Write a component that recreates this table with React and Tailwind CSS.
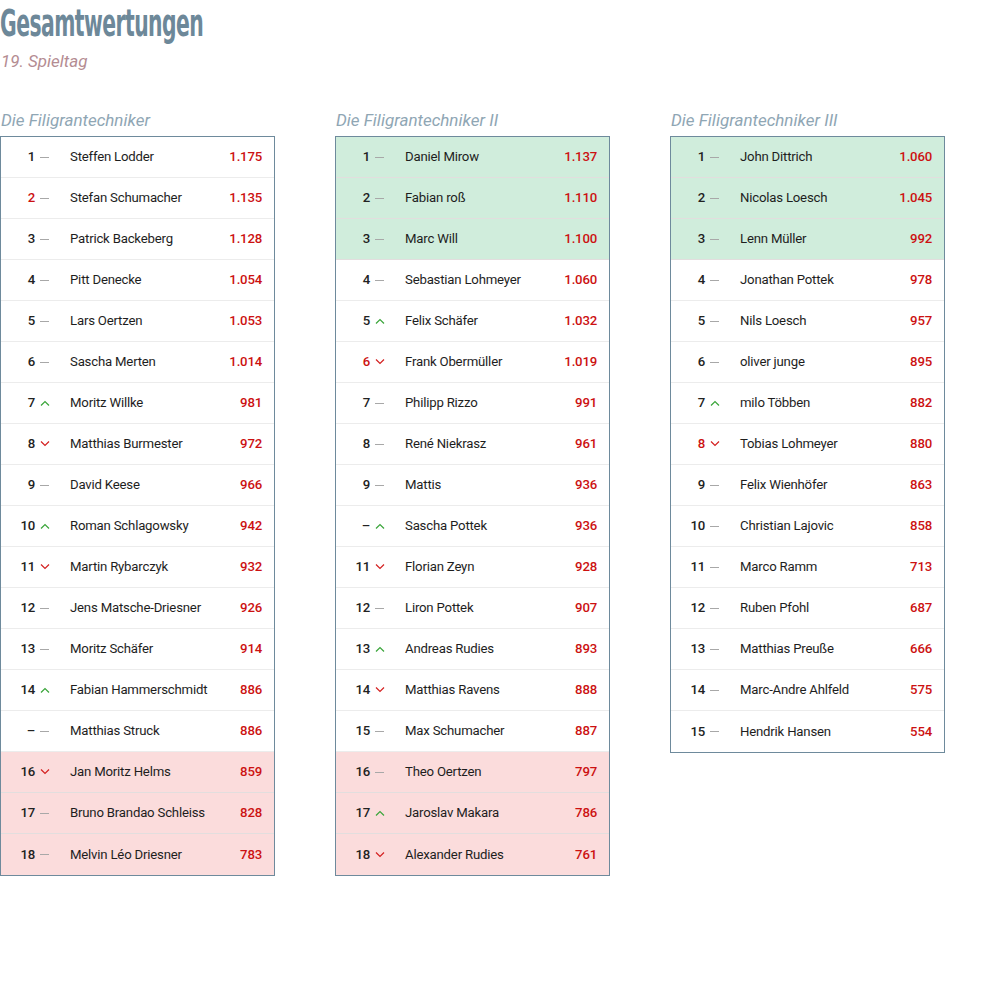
import React from "react";

const tables = [
  {
    title: "Die Filigrantechniker",
    rows: [
      ["1", "-", "Steffen Lodder", "1.175"],
      ["2", "-", "Stefan Schumacher", "1.135", "red"],
      ["3", "-", "Patrick Backeberg", "1.128"],
      ["4", "-", "Pitt Denecke", "1.054"],
      ["5", "-", "Lars Oertzen", "1.053"],
      ["6", "-", "Sascha Merten", "1.014"],
      ["7", "up", "Moritz Willke", "981"],
      ["8", "down", "Matthias Burmester", "972"],
      ["9", "-", "David Keese", "966"],
      ["10", "up", "Roman Schlagowsky", "942"],
      ["11", "down", "Martin Rybarczyk", "932"],
      ["12", "-", "Jens Matsche-Driesner", "926"],
      ["13", "-", "Moritz Schäfer", "914"],
      ["14", "up", "Fabian Hammerschmidt", "886"],
      ["–", "-", "Matthias Struck", "886"],
      ["16", "down", "Jan Moritz Helms", "859", "", "pink"],
      ["17", "-", "Bruno Brandao Schleiss", "828", "", "pink"],
      ["18", "-", "Melvin Léo Driesner", "783", "", "pink"],
    ],
  },
  {
    title: "Die Filigrantechniker II",
    rows: [
      ["1", "-", "Daniel Mirow", "1.137", "", "green"],
      ["2", "-", "Fabian roß", "1.110", "", "green"],
      ["3", "-", "Marc Will", "1.100", "", "green"],
      ["4", "-", "Sebastian Lohmeyer", "1.060"],
      ["5", "up", "Felix Schäfer", "1.032"],
      ["6", "down", "Frank Obermüller", "1.019", "red"],
      ["7", "-", "Philipp Rizzo", "991"],
      ["8", "-", "René Niekrasz", "961"],
      ["9", "-", "Mattis", "936"],
      ["–", "up", "Sascha Pottek", "936"],
      ["11", "down", "Florian Zeyn", "928"],
      ["12", "-", "Liron Pottek", "907"],
      ["13", "up", "Andreas Rudies", "893"],
      ["14", "down", "Matthias Ravens", "888"],
      ["15", "-", "Max Schumacher", "887"],
      ["16", "-", "Theo Oertzen", "797", "", "pink"],
      ["17", "up", "Jaroslav Makara", "786", "", "pink"],
      ["18", "down", "Alexander Rudies", "761", "", "pink"],
    ],
  },
  {
    title: "Die Filigrantechniker III",
    rows: [
      ["1", "-", "John Dittrich", "1.060", "", "green"],
      ["2", "-", "Nicolas Loesch", "1.045", "", "green"],
      ["3", "-", "Lenn Müller", "992", "", "green"],
      ["4", "-", "Jonathan Pottek", "978"],
      ["5", "-", "Nils Loesch", "957"],
      ["6", "-", "oliver junge", "895"],
      ["7", "up", "milo Többen", "882"],
      ["8", "down", "Tobias Lohmeyer", "880", "red"],
      ["9", "-", "Felix Wienhöfer", "863"],
      ["10", "-", "Christian Lajovic", "858"],
      ["11", "-", "Marco Ramm", "713"],
      ["12", "-", "Ruben Pfohl", "687"],
      ["13", "-", "Matthias Preuße", "666"],
      ["14", "-", "Marc-Andre Ahlfeld", "575"],
      ["15", "-", "Hendrik Hansen", "554"],
    ],
  },
];

const Trend = ({ dir }) => {
  if (dir === "up")
    return (
      <svg width="10" height="6" viewBox="0 0 10 6" className="text-[#3aa53a]">
        <path d="M1 5.5 L5 1.5 L9 5.5" fill="none" stroke="currentColor" strokeWidth="1.2" />
      </svg>
    );
  if (dir === "down")
    return (
      <svg width="10" height="6" viewBox="0 0 10 6" className="text-[#d42020]">
        <path d="M1 0.5 L5 4.5 L9 0.5" fill="none" stroke="currentColor" strokeWidth="1.2" />
      </svg>
    );
  return <span className="block w-[9px] h-px bg-[#a8a8a8]" />;
};

const Row = ({ row, last }) => {
  const [rank, dir, name, score, rankColor, bg] = row;
  const bgCls = bg === "green" ? "bg-[#d0eddc]" : bg === "pink" ? "bg-[#fbdcdc]" : "bg-white";
  const borderCls = bg ? "border-[#e2dede]" : "border-[#ececec]";
  return (
    <div className={`flex items-center h-[41px] ${bgCls} ${last ? "" : `border-b ${borderCls}`}`}>
      <span className={`w-[34px] text-right font-medium ${rankColor ? "text-[#cc1111]" : "text-[#222]"}`}>
        {rank}
      </span>
      <span className="w-[35px] pl-[5px] flex items-center">
        <Trend dir={dir} />
      </span>
      <span className="flex-1 text-[#1e1e1e]">{name}</span>
      <span className="pr-[12px] font-medium text-[#cc1111]">{score}</span>
    </div>
  );
};

const Table = ({ title, rows }) => (
  <div className="w-[275px]">
    <h2 className="italic text-[17px] leading-[22px] text-[#8fa6b4] pl-px">{title}</h2>
    <div className="mt-[5px] border border-[#6e8a9c] text-[13.2px] tracking-[-0.2px]">
      {rows.map((r, i) => (
        <Row key={i} row={r} last={i === rows.length - 1} />
      ))}
    </div>
  </div>
);

export default function App() {
  return (
    <div className="bg-white min-h-[1000px] font-['Roboto',sans-serif]">
      <h1 className="font-['DejaVu_Sans',sans-serif] font-bold text-[38px] leading-[44px] text-[#6d8899] tracking-[-1px] pt-[1px] origin-left scale-x-[0.535]">
        Gesamtwertungen
      </h1>
      <p className="italic text-[17px] leading-[20px] text-[#b48c92] mt-[6px] pl-[1px]">19. Spieltag</p>
      <div className="flex gap-[60px] mt-[38px] items-start">
        {tables.map((t, i) => (
          <Table key={i} {...t} />
        ))}
      </div>
    </div>
  );
}
